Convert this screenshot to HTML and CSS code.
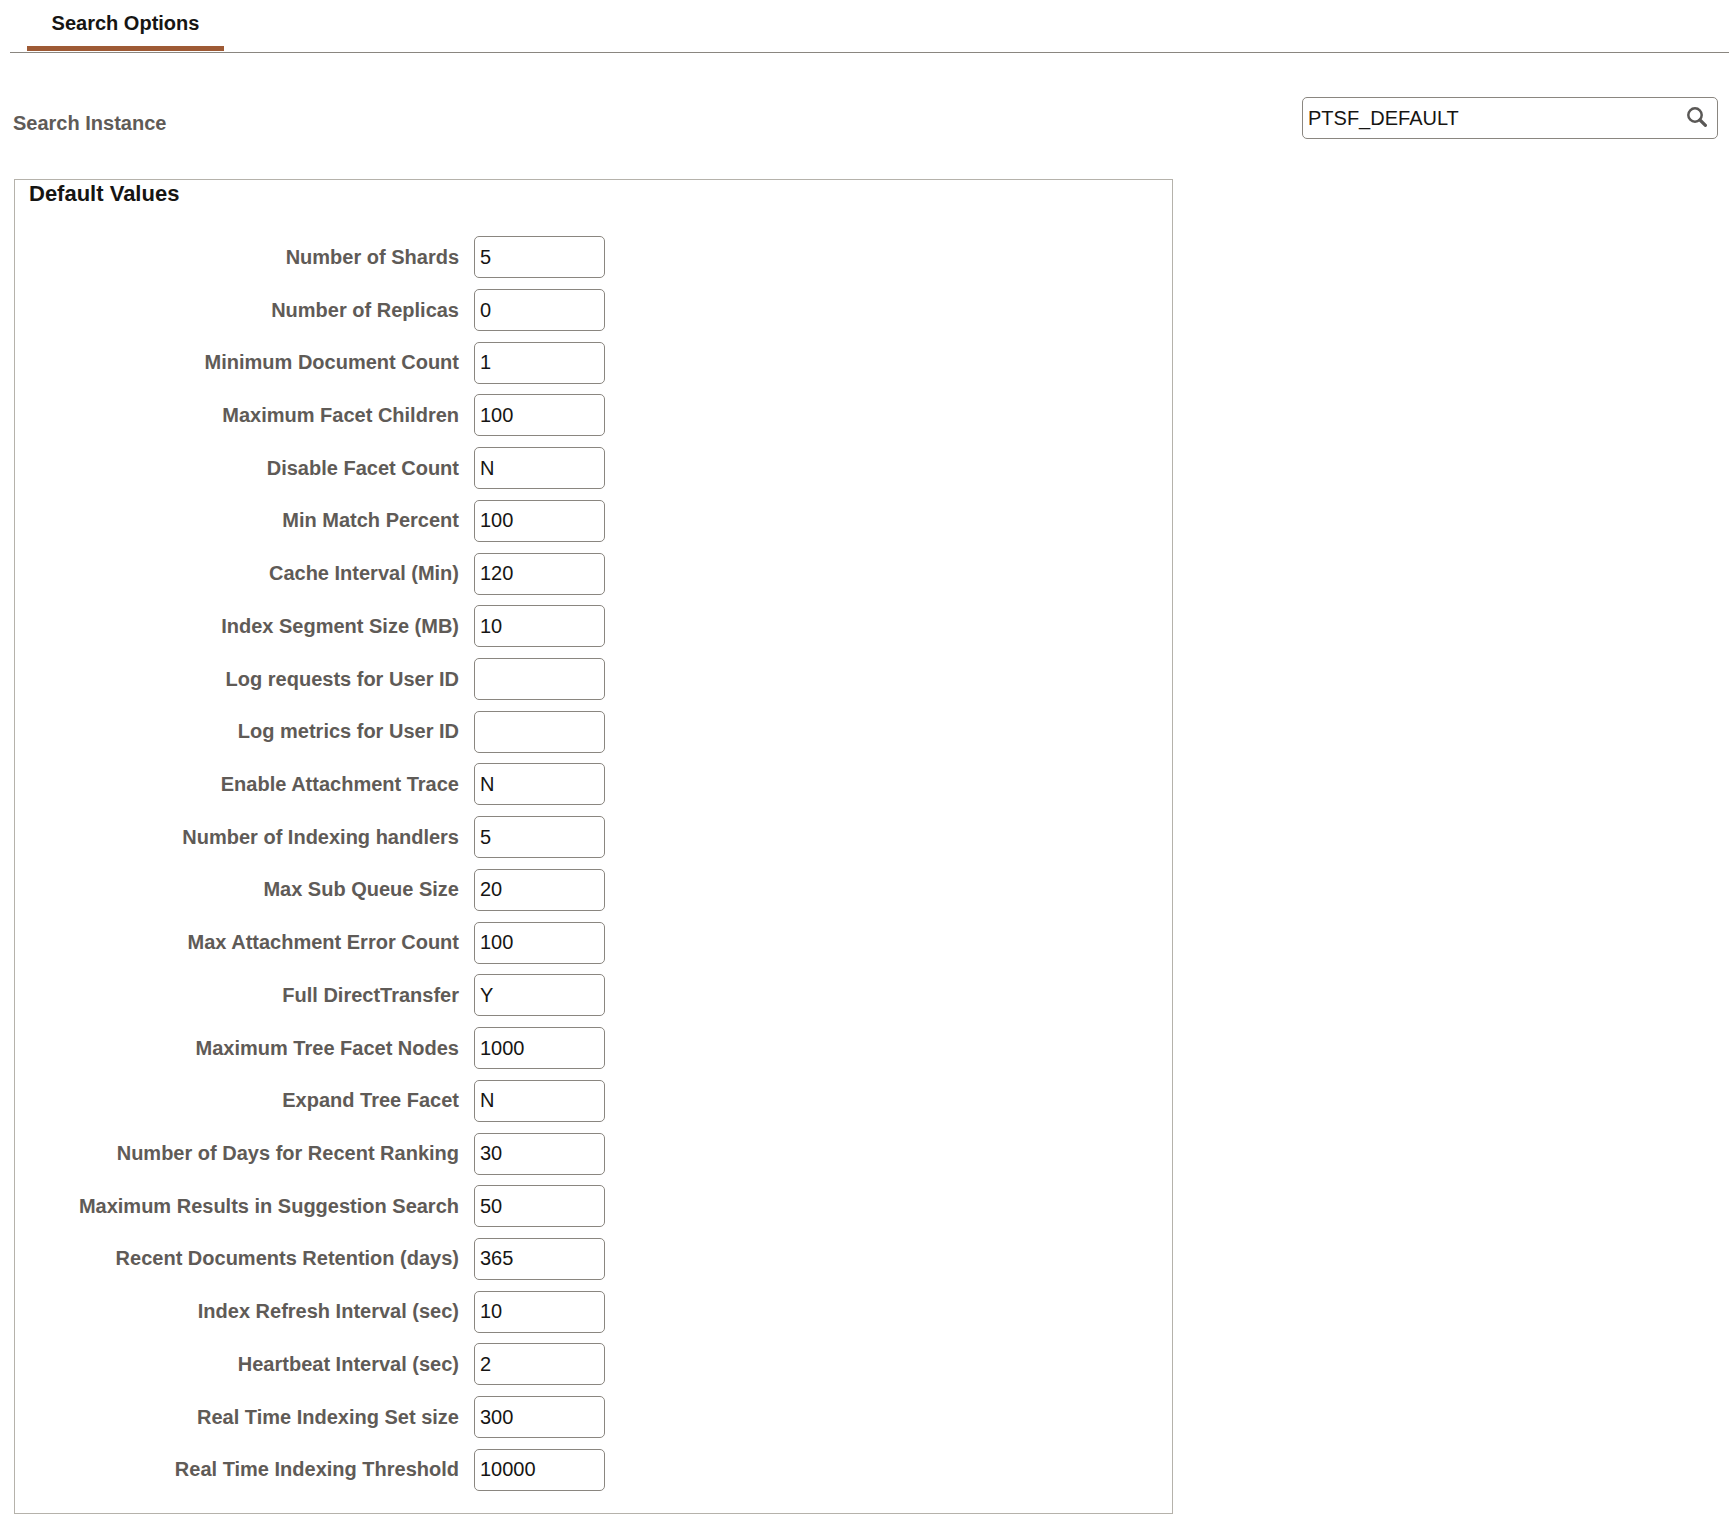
FILE: index.html
```html
<!DOCTYPE html>
<html lang="en">
<head>
  <meta charset="UTF-8">
  <title>Search Options</title>
  <link rel="stylesheet" href="styles.css">
</head>
<body>
  <nav class="tabs">
    <a class="tabs__item" href="#">Search Options</a>
  </nav>

  <div class="instance">
    <label for="instance" class="instance__label">Search Instance</label>
    <div class="lookup">
      <input type="text" id="instance" class="lookup__input" value="PTSF_DEFAULT">
      <svg class="lookup__icon" viewBox="0 0 20 20" aria-hidden="true">
        <circle cx="8" cy="8" r="6.7" fill="none" stroke="currentColor" stroke-width="2.5"/>
        <path d="M13 13 L18.4 18.4" fill="none" stroke="currentColor" stroke-width="3.2" stroke-linecap="round"/>
      </svg>
    </div>
  </div>

  <section class="group">
    <h2 class="group__title">Default Values</h2>
    <div class="fields">
      <label for="f1">Number of Shards</label>
      <input type="text" id="f1" value="5">
      <label for="f2">Number of Replicas</label>
      <input type="text" id="f2" value="0">
      <label for="f3">Minimum Document Count</label>
      <input type="text" id="f3" value="1">
      <label for="f4">Maximum Facet Children</label>
      <input type="text" id="f4" value="100">
      <label for="f5">Disable Facet Count</label>
      <input type="text" id="f5" value="N">
      <label for="f6">Min Match Percent</label>
      <input type="text" id="f6" value="100">
      <label for="f7">Cache Interval (Min)</label>
      <input type="text" id="f7" value="120">
      <label for="f8">Index Segment Size (MB)</label>
      <input type="text" id="f8" value="10">
      <label for="f9">Log requests for User ID</label>
      <input type="text" id="f9" value="">
      <label for="f10">Log metrics for User ID</label>
      <input type="text" id="f10" value="">
      <label for="f11">Enable Attachment Trace</label>
      <input type="text" id="f11" value="N">
      <label for="f12">Number of Indexing handlers</label>
      <input type="text" id="f12" value="5">
      <label for="f13">Max Sub Queue Size</label>
      <input type="text" id="f13" value="20">
      <label for="f14">Max Attachment Error Count</label>
      <input type="text" id="f14" value="100">
      <label for="f15">Full DirectTransfer</label>
      <input type="text" id="f15" value="Y">
      <label for="f16">Maximum Tree Facet Nodes</label>
      <input type="text" id="f16" value="1000">
      <label for="f17">Expand Tree Facet</label>
      <input type="text" id="f17" value="N">
      <label for="f18">Number of Days for Recent Ranking</label>
      <input type="text" id="f18" value="30">
      <label for="f19">Maximum Results in Suggestion Search</label>
      <input type="text" id="f19" value="50">
      <label for="f20">Recent Documents Retention (days)</label>
      <input type="text" id="f20" value="365">
      <label for="f21">Index Refresh Interval (sec)</label>
      <input type="text" id="f21" value="10">
      <label for="f22">Heartbeat Interval (sec)</label>
      <input type="text" id="f22" value="2">
      <label for="f23">Real Time Indexing Set size</label>
      <input type="text" id="f23" value="300">
      <label for="f24">Real Time Indexing Threshold</label>
      <input type="text" id="f24" value="10000">
    </div>
  </section>
</body>
</html>
```

FILE: styles.css
```css
*, *:after, *:before {
  box-sizing: border-box;
}

html, body {
  margin: 0;
  background-color: #fff;
  font-family: "Liberation Sans", Arial, sans-serif;
}

body {
  min-height: 1529px;
}

input {
  height: 42px;
  padding: 0 5px;
  background-color: #fff;
  border: 1px solid #8a8680;
  border-radius: 5px;
  outline: none;
  color: #161513;
  font-size: 20px;
  font-family: inherit;
}

.tabs {
  display: flex;
  margin-left: 10px;
  padding: 0 0 1px 17px;
  border-bottom: 1px solid #8a8680;
}

.tabs__item {
  width: 197px;
  height: 51px;
  padding-top: 11px;
  border-bottom: 5px solid #9e5a35;
  color: #161513;
  font-size: 20px;
  font-weight: 700;
  line-height: 24px;
  text-align: center;
  text-decoration: none;
}

.instance {
  display: flex;
  justify-content: space-between;
  margin-top: 44px;
  padding: 0 11px 0 13px;
}

.instance__label {
  padding-top: 14px;
  color: #5f5b57;
  font-size: 20px;
  font-weight: 700;
  line-height: 24px;
}

.lookup {
  position: relative;
  width: 416px;
}

.lookup__input {
  width: 100%;
}

.lookup__icon {
  position: absolute;
  top: 10px;
  right: 11px;
  width: 20px;
  height: 20px;
  color: #5a5856;
}

.group {
  width: 1159px;
  height: 1335px;
  margin: 40px 0 0 14px;
  border: 1px solid #b5b2ab;
}

.group__title {
  margin: 0;
  padding: 2px 0 0 14px;
  color: #161513;
  font-size: 22px;
  font-weight: 700;
  line-height: 24px;
}

.fields {
  display: grid;
  grid-template-columns: 444px 131px;
  column-gap: 15px;
  row-gap: 10.73px;
  margin-top: 30.3px;
}

.fields label {
  align-self: center;
  color: #5f5b57;
  font-size: 20px;
  font-weight: 700;
  text-align: right;
}
```
